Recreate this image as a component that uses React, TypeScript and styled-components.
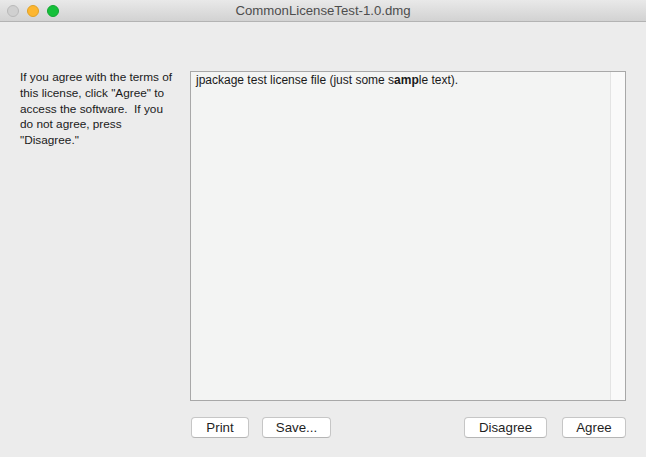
import React from "react";
import styled, { createGlobalStyle } from "styled-components";

const Global = createGlobalStyle`
  html, body { margin: 0; padding: 0; background: #ececec; }
  body { font-family: "Liberation Sans", Arial, sans-serif; }
`;

const Window = styled.div`
  width: 646px;
  height: 457px;
  background: #ececec;
  display: flex;
  flex-direction: column;
  overflow: hidden;
  box-sizing: border-box;
`;

const TitleBar = styled.div`
  height: 22px;
  flex: none;
  box-sizing: border-box;
  background: linear-gradient(#e9e9e9, #d2d2d2);
  border-bottom: 1px solid #b3b3b3;
  display: flex;
  align-items: center;
  position: relative;
  padding-left: 7px;
`;

const Lights = styled.div`
  display: flex;
  gap: 8px;
`;

const Light = styled.div<{ $fill: string; $border: string }>`
  width: 12px;
  height: 12px;
  border-radius: 50%;
  box-sizing: border-box;
  background: ${(p) => p.$fill};
  border: 1px solid ${(p) => p.$border};
`;

const Title = styled.div`
  position: absolute;
  left: 0;
  right: 0;
  top: 0;
  bottom: 0;
  display: flex;
  align-items: center;
  justify-content: center;
  font-size: 13.2px;
  color: #4d4d4d;
  pointer-events: none;
`;

const Body = styled.div`
  flex: 1;
  display: flex;
  flex-direction: column;
  padding: 49px 20px 0 20px;
`;

const Main = styled.div`
  display: flex;
`;

const Prompt = styled.div`
  width: 170px;
  margin-top: -1px;
  font-size: 11.8px;
  line-height: 15.8px;
  color: #1a1a1a;
  white-space: pre-wrap;
`;

const TextBox = styled.div`
  width: 436px;
  height: 330px;
  box-sizing: border-box;
  border: 1px solid #a8a8a8;
  background: #f3f4f3;
  display: flex;
`;

const TextArea = styled.div`
  flex: 1;
  padding: 1px 5px;
  font-size: 12px;
  line-height: 15px;
  color: #1a1a1a;
`;

const ScrollTrack = styled.div`
  width: 14px;
  background: #fafafa;
  border-left: 1px solid #e4e4e4;
`;

const Buttons = styled.div`
  display: flex;
  margin-top: 16px;
  padding-left: 171px;
`;

const Button = styled.div<{ $w: number; $ml: number }>`
  width: ${(p) => p.$w}px;
  margin-left: ${(p) => p.$ml}px;
  height: 21px;
  box-sizing: border-box;
  background: #ffffff;
  border: 1px solid #c6c6c6;
  border-bottom-color: #b5b5b5;
  border-radius: 4px;
  display: flex;
  align-items: center;
  justify-content: center;
  font-size: 13.3px;
  color: #1f1f1f;
`;

export default function App() {
  return (
    <>
      <Global />
      <Window>
        <TitleBar>
          <Lights>
            <Light $fill="#d0d0d0" $border="#b9b9b9" />
            <Light $fill="#fdb62f" $border="#e0a125" />
            <Light $fill="#15c03a" $border="#12a631" />
          </Lights>
          <Title>CommonLicenseTest-1.0.dmg</Title>
        </TitleBar>
        <Body>
          <Main>
            <Prompt>
              {'If you agree with the terms of\nthis license, click "Agree" to\naccess the software.  If you\ndo not agree, press\n"Disagree."'}
            </Prompt>
            <TextBox>
              <TextArea>
                jpackage test license file (just some s<b>amp</b>le text).
              </TextArea>
              <ScrollTrack />
            </TextBox>
          </Main>
          <Buttons>
            <Button $w={58} $ml={0}>Print</Button>
            <Button $w={69} $ml={13}>Save...</Button>
            <Button $w={83} $ml={133}>Disagree</Button>
            <Button $w={64} $ml={15}>Agree</Button>
          </Buttons>
        </Body>
      </Window>
    </>
  );
}
